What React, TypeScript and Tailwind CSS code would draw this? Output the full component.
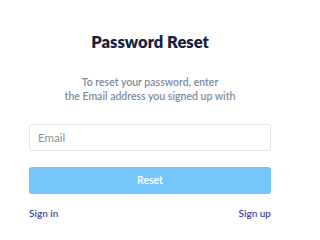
export default function App() {
  return (
    <div className="w-[300px] h-[237px] bg-white font-['Lato',sans-serif]">
      <div className="flex flex-col items-center pt-[32px] px-[29px]">
        <h1 className="text-[16.5px] leading-[20px] font-extrabold text-[#1a1f3d]">Password Reset</h1>
        <p className="mt-[23px] text-[10.5px] leading-[14px] font-semibold text-[#7f8a9c] text-center">
          To reset your password, enter
          <br />
          the Email address you signed up with
        </p>
        <input
          type="text"
          placeholder="Email"
          className="mt-[21px] w-full h-[27px] rounded-[3px] border border-[#e3e3e3] px-[8px] text-[11.5px] placeholder:text-[#8a8f98] outline-none"
        />
        <button className="mt-[16px] w-full h-[27px] rounded-[3px] bg-[#73c5fc] text-white text-[10.5px] font-semibold">
          Reset
        </button>
        <div className="mt-[12px] w-full flex justify-between text-[10px] font-semibold text-[#43439a]">
          <a href="#">Sign in</a>
          <a href="#">Sign up</a>
        </div>
      </div>
    </div>
  );
}
